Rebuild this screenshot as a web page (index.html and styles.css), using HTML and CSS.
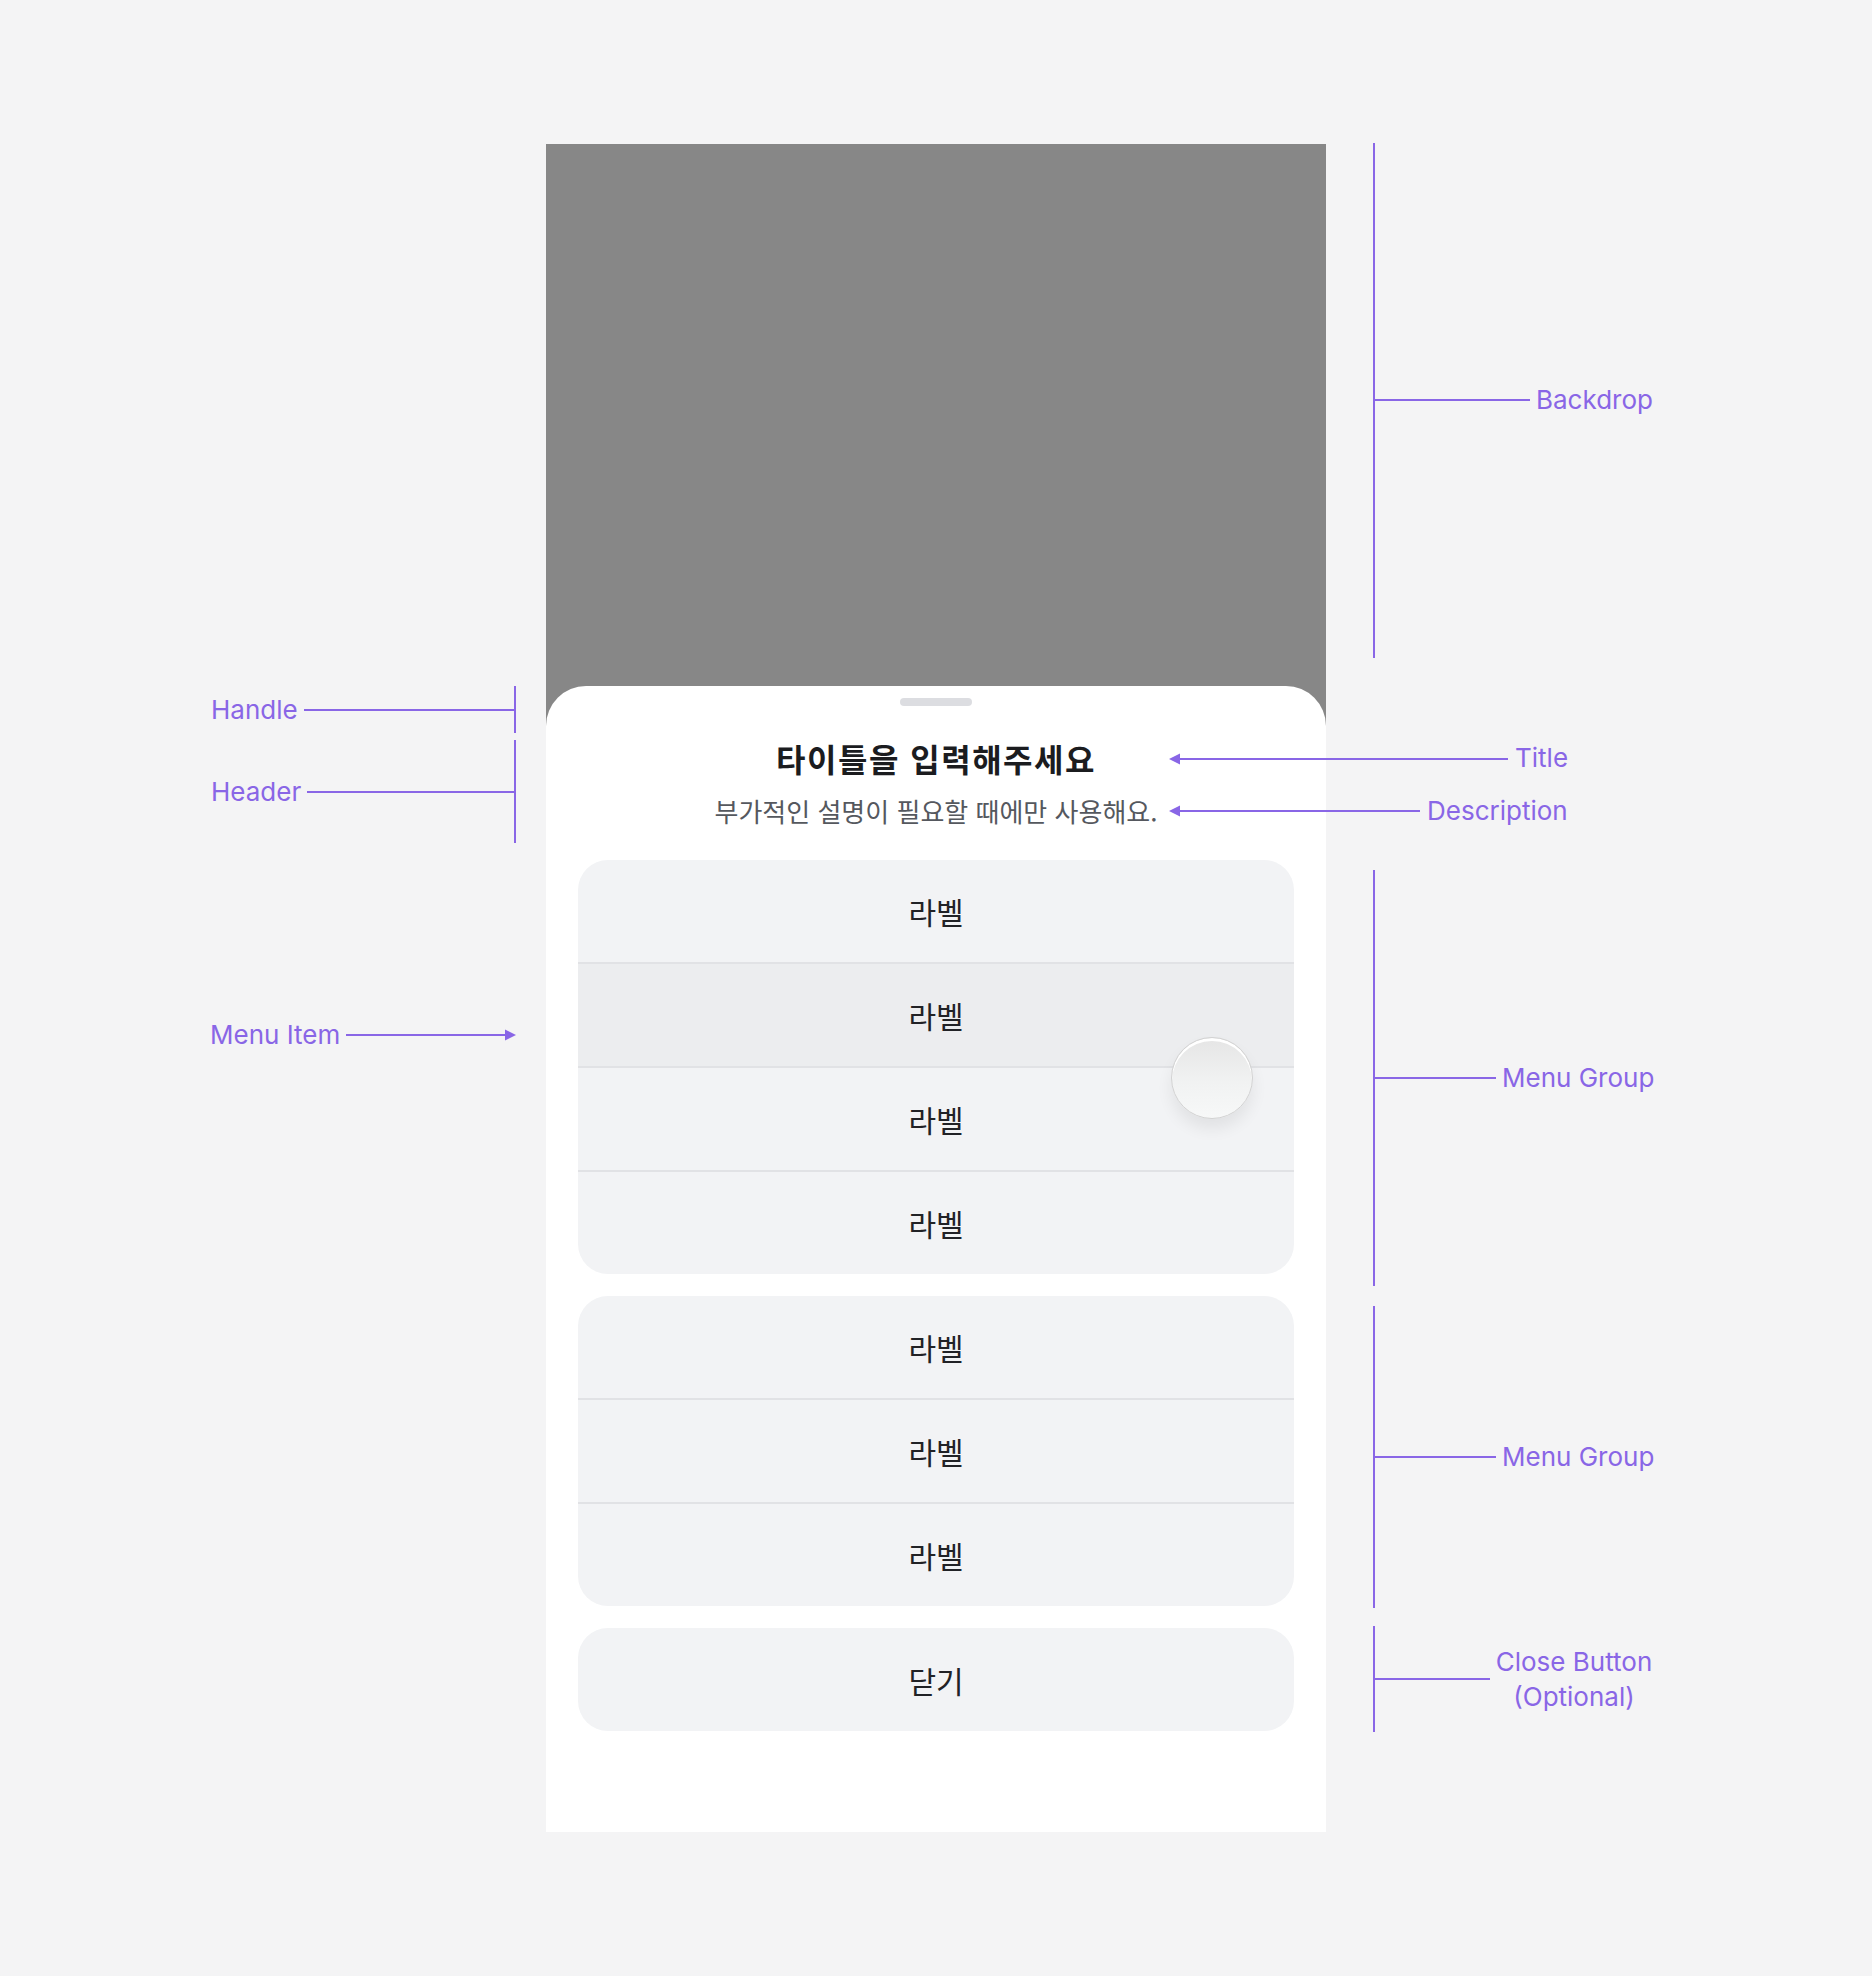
FILE: index.html
```html
<!DOCTYPE html>
<html lang="ko">
<head>
<meta charset="utf-8">
<title>Bottom Sheet · Menu</title>
<link rel="stylesheet" href="styles.css">
</head>
<body>
<div class="canvas">
  <div class="phone">
    <div class="backdrop"></div>
    <div class="sheet">
      <div class="handle"></div>
      <div class="header">
        <h1 class="title">타이틀을 입력해주세요</h1>
        <p class="desc">부가적인 설명이 필요할 때에만 사용해요.</p>
      </div>
      <div class="menus">
        <div class="group">
          <div class="item">라벨</div>
          <div class="item pressed">라벨</div>
          <div class="item">라벨</div>
          <div class="item">라벨</div>
          <div class="touch"></div>
        </div>
        <div class="group">
          <div class="item">라벨</div>
          <div class="item">라벨</div>
          <div class="item">라벨</div>
        </div>
        <div class="group close">
          <div class="item">닫기</div>
        </div>
      </div>
    </div>
  </div>

  <!-- callout lines -->
  <svg class="callouts" width="1872" height="1976" viewBox="0 0 1872 1976">
    <g fill="none" stroke="#8966e6" stroke-width="2">
      <path d="M1374 143 V658 M1374 400 H1530"/>
      <path d="M1178 759 H1508"/>
      <path d="M1178 811 H1420"/>
      <path d="M1374 870 V1286 M1374 1078 H1496"/>
      <path d="M1374 1306 V1608 M1374 1457 H1496"/>
      <path d="M1374 1626 V1732 M1374 1679 H1490"/>
      <path d="M515 686 V733 M304 710 H515"/>
      <path d="M515 740 V843 M307 792 H515"/>
      <path d="M346 1035 H507"/>
    </g>
    <g fill="#8966e6">
      <polygon points="1169,759 1180,753.5 1180,764.5"/>
      <polygon points="1169,811 1180,805.5 1180,816.5"/>
      <polygon points="516,1035 505,1029.5 505,1040.5"/>
    </g>
  </svg>

  <span class="note note-backdrop">Backdrop</span>
  <span class="note note-title">Title</span>
  <span class="note note-desc">Description</span>
  <span class="note note-group1">Menu Group</span>
  <span class="note note-group2">Menu Group</span>
  <span class="note note-close">Close Button<br>(Optional)</span>
  <span class="note note-handle">Handle</span>
  <span class="note note-header">Header</span>
  <span class="note note-item">Menu Item</span>
</div>
</body>
</html>
```

FILE: styles.css
```css
* {
  box-sizing: border-box;
}

html,
body {
  margin: 0;
  background: #f4f4f5;
}

.canvas {
  position: relative;
  width: 1872px;
  height: 1976px;
  padding: 144px 0 0 546px;
}

/* device frame */
.phone {
  width: 780px;
  height: 1688px;
  display: flex;
  flex-direction: column;
  background: #878787;
}

.backdrop {
  flex: 1;
}

.sheet {
  height: 1146px;
  background: #ffffff;
  border-radius: 40px 40px 0 0;
  padding: 12px 32px 0;
  display: flex;
  flex-direction: column;
}

.handle {
  align-self: center;
  width: 72px;
  height: 8px;
  border-radius: 4px;
  background: #dcdde1;
}

.header {
  padding-top: 31px;
  text-align: center;
  font-family: "Noto Sans CJK KR", "Noto Sans", sans-serif;
}

.title {
  margin: 0;
  font-size: 32px;
  line-height: 42px;
  font-weight: 700;
  color: #1b1c1f;
  letter-spacing: 1.5px;
}

.desc {
  margin: 15px 0 0;
  font-size: 26px;
  line-height: 34px;
  font-weight: 400;
  color: #55585e;
}

.menus {
  margin-top: 32px;
  display: flex;
  flex-direction: column;
  gap: 22px;
}

.group {
  position: relative;
  background: #f2f3f5;
  border-radius: 30px;
}

.item {
  height: 102px;
  display: flex;
  align-items: center;
  justify-content: center;
  font-family: "Noto Sans CJK KR", "Noto Sans", sans-serif;
  font-size: 30px;
  color: #212226;
}

.item + .item {
  height: 104px;
  border-top: 2px solid #e1e2e5;
}

.item.pressed {
  background: #ecedef;
}

.close .item {
  height: 103px;
}

/* finger touch indicator */
.touch {
  position: absolute;
  left: 593px;
  top: 177px;
  width: 82px;
  height: 82px;
  border-radius: 50%;
  border: 1.5px solid #d2d2d2;
  background: linear-gradient(#e5e5e5, #f1f2f2 55%, #f7f8f8);
  box-shadow: inset 0 3px 0 #ffffff, 0 10px 16px rgba(0, 0, 0, 0.07);
}

/* annotations */
.callouts {
  position: absolute;
  left: 0;
  top: 0;
  pointer-events: none;
}

.note {
  position: absolute;
  font-family: Inter, "Liberation Sans", sans-serif;
  font-size: 26px;
  line-height: 32px;
  color: #8966e6;
  white-space: nowrap;
}

.note-backdrop { left: 1536px; top: 384px; }
.note-title { left: 1515px; top: 742px; }
.note-desc { left: 1427px; top: 795px; }
.note-group1 { left: 1502px; top: 1062px; }
.note-group2 { left: 1502px; top: 1441px; }
.note-close {
  left: 1474px;
  width: 200px;
  top: 1644px;
  line-height: 35px;
  text-align: center;
}
.note-handle { left: 211px; top: 694px; }
.note-header { left: 211px; top: 776px; }
.note-item { left: 210px; top: 1019px; }
```
